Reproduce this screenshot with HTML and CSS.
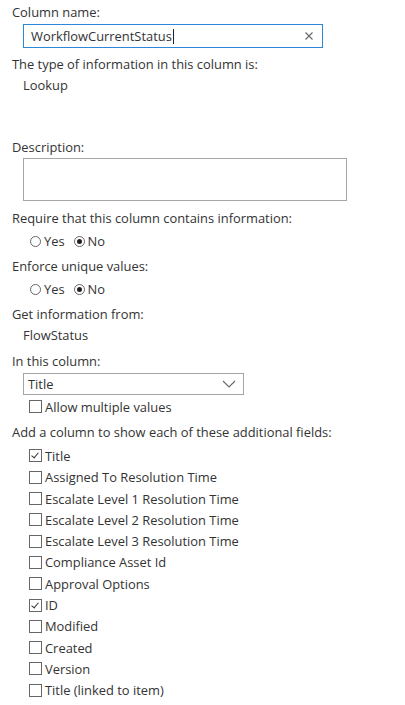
FILE: index.html
```html
<!DOCTYPE html>
<html>
<head>
<meta charset="utf-8">
<link rel="stylesheet" href="styles.css">
</head>
<body>
<div class="form">
  <div class="label first">Column name:</div>
  <div class="textbox">
    <span class="tb-text">WorkflowCurrentStatus</span><span class="caret"></span>
    <svg class="clear" width="10" height="10" viewBox="0 0 10 10"><path d="M1.5 1.5L8.5 8.5M8.5 1.5L1.5 8.5" stroke="#666" stroke-width="1.1" fill="none"/></svg>
  </div>
  <div class="label gap8">The type of information in this column is:</div>
  <div class="value">Lookup</div>

  <div class="label desc">Description:</div>
  <div class="textarea"></div>

  <div class="label gap9">Require that this column contains information:</div>
  <div class="radios">
    <span class="radio"></span><span class="rtext">Yes</span>
    <span class="radio on"></span><span class="rtext">No</span>
  </div>

  <div class="label gap7">Enforce unique values:</div>
  <div class="radios">
    <span class="radio"></span><span class="rtext">Yes</span>
    <span class="radio on"></span><span class="rtext">No</span>
  </div>

  <div class="label gap7">Get information from:</div>
  <div class="value">FlowStatus</div>

  <div class="label gap10">In this column:</div>
  <div class="select">
    <span>Title</span>
    <svg width="14" height="8" viewBox="0 0 14 8"><path d="M1 1L7 7L13 1" stroke="#666" stroke-width="1.1" fill="none"/></svg>
  </div>
  <div class="check single"><span class="box"></span>Allow multiple values</div>

  <div class="label gap7">Add a column to show each of these additional fields:</div>
  <div class="checks">
    <div class="check"><span class="box on"></span>Title</div>
    <div class="check"><span class="box"></span>Assigned To Resolution Time</div>
    <div class="check"><span class="box"></span>Escalate Level 1 Resolution Time</div>
    <div class="check"><span class="box"></span>Escalate Level 2 Resolution Time</div>
    <div class="check"><span class="box"></span>Escalate Level 3 Resolution Time</div>
    <div class="check"><span class="box"></span>Compliance Asset Id</div>
    <div class="check"><span class="box"></span>Approval Options</div>
    <div class="check"><span class="box on"></span>ID</div>
    <div class="check"><span class="box"></span>Modified</div>
    <div class="check"><span class="box"></span>Created</div>
    <div class="check"><span class="box"></span>Version</div>
    <div class="check"><span class="box"></span>Title (linked to item)</div>
  </div>
</div>
</body>
</html>
```
FILE: styles.css
```css
html, body {
  margin: 0;
  padding: 0;
  background: #fff;
}
body {
  font-family: "Open Sans", "Noto Sans", sans-serif;
  font-size: 12.9px;
  color: #333;
}
.form {
  padding-left: 12px;
  display: flex;
  flex-direction: column;
  align-items: flex-start;
}
.label {
  height: 16px;
  line-height: 16px;
  white-space: nowrap;
}
.first { margin-top: 4px; }
.gap7 { margin-top: 7px; }
.gap8 { margin-top: 8px; }
.gap9 { margin-top: 9px; }
.gap10 { margin-top: 10px; }
.desc { margin-top: 46px; }
.value {
  margin-top: 5px;
  margin-left: 11px;
  height: 16px;
  line-height: 16px;
}
.textbox {
  margin-top: 4px;
  margin-left: 11px;
  box-sizing: border-box;
  width: 300px;
  height: 24px;
  border: 1px solid #2b88d8;
  display: flex;
  align-items: center;
  padding-left: 7px;
  padding-right: 8px;
  color: #333;
}
.tb-text { line-height: 16px; }
.caret {
  display: inline-block;
  width: 1px;
  height: 15px;
  background: #222;
  margin-left: 1px;
}
.clear { margin-left: auto; }
.textarea {
  margin-top: 3px;
  margin-left: 11px;
  box-sizing: border-box;
  width: 324px;
  height: 43px;
  border: 1px solid #a6a6a6;
}
.radios {
  margin-top: 5px;
  margin-left: 18px;
  height: 20px;
  display: flex;
  align-items: center;
}
.radio {
  box-sizing: border-box;
  width: 11px;
  height: 11px;
  border: 1px solid #666;
  border-radius: 50%;
  display: inline-flex;
  align-items: center;
  justify-content: center;
}
.radio.on::after {
  content: "";
  width: 5px;
  height: 5px;
  border-radius: 50%;
  background: #222;
}
.rtext { margin-left: 3px; margin-right: 9px; }
.select {
  margin-top: 4px;
  margin-left: 11px;
  box-sizing: border-box;
  width: 221px;
  height: 22px;
  border: 1px solid #a6a6a6;
  display: flex;
  align-items: center;
  justify-content: space-between;
  padding-left: 4px;
  padding-right: 7px;
}
.checks {
  margin-top: 5px;
  display: flex;
  flex-direction: column;
}
.check {
  height: 21.3px;
  display: flex;
  align-items: center;
  margin-left: 17px;
  white-space: nowrap;
}
.single { margin-top: 1px; }
.box {
  box-sizing: border-box;
  width: 13px;
  height: 13px;
  border: 1px solid #666;
  margin-right: 3px;
  position: relative;
  flex: none;
}
.box.on::after {
  content: "";
  position: absolute;
  left: 3px;
  top: 1px;
  width: 3px;
  height: 6px;
  border-right: 1px solid #333;
  border-bottom: 1px solid #333;
  transform: rotate(40deg);
  transform-origin: center;
}
```
